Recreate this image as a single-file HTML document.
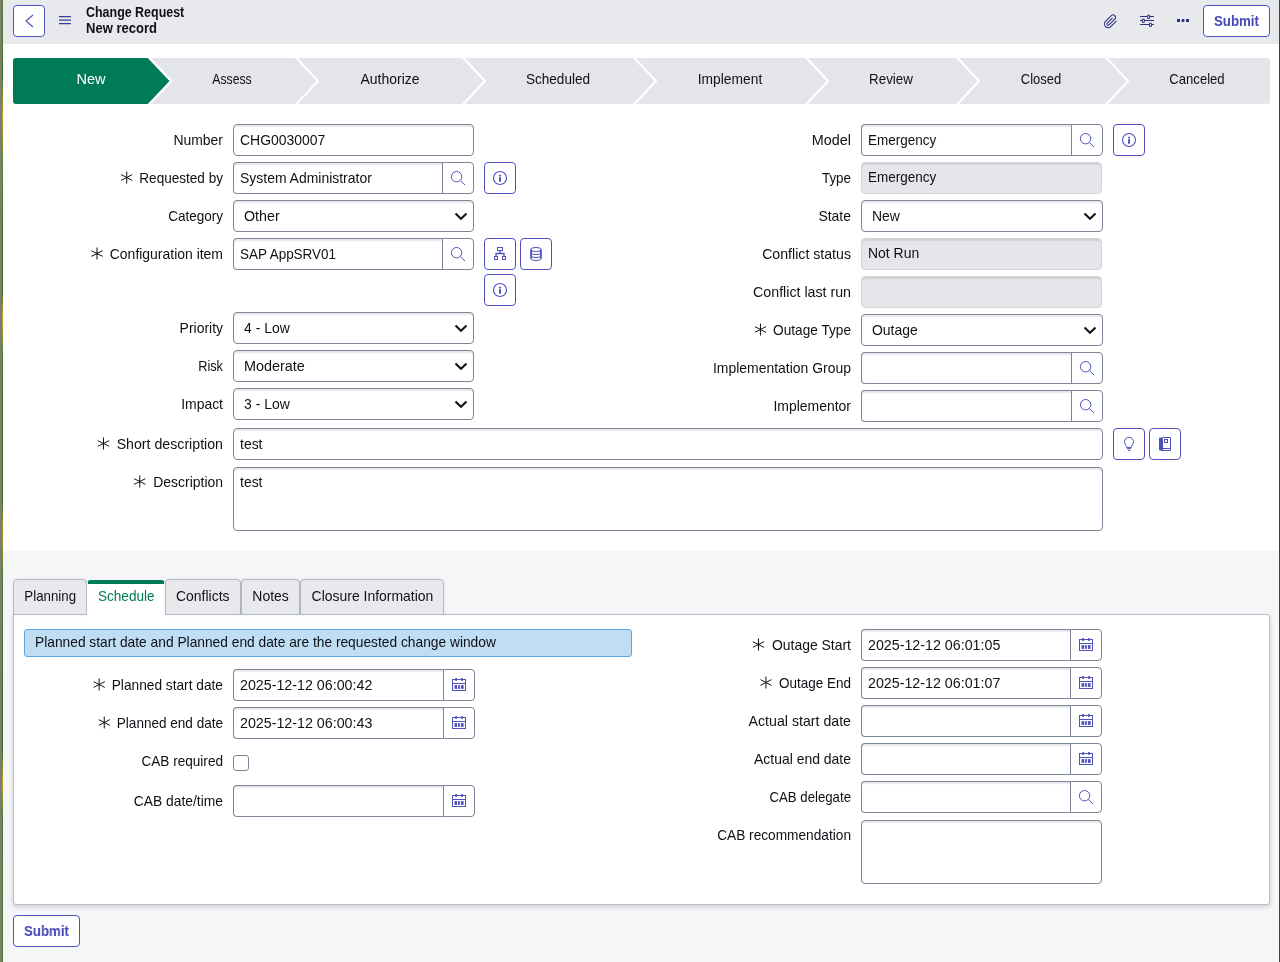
<!DOCTYPE html>
<html>
<head>
<meta charset="utf-8">
<title>Change Request</title>
<style>
*{box-sizing:border-box;margin:0;padding:0}
html,body{width:1280px;height:962px;overflow:hidden}
body{position:relative;will-change:transform;background:#f5f6f8;font-family:"Liberation Sans",sans-serif;font-size:14px;color:#0e1016}
.abs{position:absolute}
#edgeL{position:absolute;left:0;top:0;width:2px;height:962px;background:#7b7b7c;z-index:50}
#edgeL2{position:absolute;left:2px;top:0;width:1px;height:962px;z-index:50;background:linear-gradient(180deg,#5a7a20 0,#3d7a1c 8%,#c9a526 12%,#4a8a22 17%,#2f6d1a 30%,#d3a82a 33%,#3f7f22 37%,#356f1c 52%,#b99b28 55%,#3f8020 60%,#2f6d1a 78%,#c9a526 81%,#3f7f22 85%,#4c7d20 100%)}
#edgeR{position:absolute;left:1278.7px;top:0;width:1.3px;height:962px;background:#2d5216;z-index:50}
#hdr{position:absolute;left:0;top:0;width:1280px;height:44px;background:#e8e9ed}
#white{position:absolute;left:0;top:44px;width:1280px;height:507px;background:#fff}
.ibtn{position:absolute;width:32px;height:32px;border:1px solid #4f52bd;border-radius:4px;background:#fff}
.ibtn svg{position:absolute;left:0;top:0}
.tbtn{position:absolute;height:32px;border:1px solid #4f52bd;border-radius:4px;background:#fff;color:#4447b8;font-weight:bold;font-size:15px;line-height:30px;text-align:center}
.tbtn span{display:inline-block;transform:scaleX(.885);transform-origin:center}
.title{position:absolute;left:85.6px;top:3.6px;font-weight:bold;font-size:15px;line-height:16px;color:#0f1116;white-space:nowrap;transform:scaleX(.83);transform-origin:left top}
.t{display:inline-block;transform:scaleX(.93);transform-origin:left center;white-space:nowrap}
.t.c{transform-origin:center center}
/* process flow */
#flow{position:absolute;left:13px;top:58px;width:1257px;height:46px;background:#e4e5ea;border-radius:3px;overflow:hidden}
#flow .st{position:absolute;top:0;height:46px;line-height:42px;text-align:center;font-size:15px;color:#0e1016;white-space:nowrap;transform:scaleX(.93);transform-origin:center center}
#flow svg{position:absolute;left:0;top:0}
/* form */
.lbl{position:absolute;height:32px;line-height:31px;text-align:right;white-space:nowrap;font-size:15px;color:#0e1016;transform:scaleX(.93);transform-origin:right center}
.lbl svg{display:inline-block;vertical-align:-1px;margin-right:7.5px}
.inp{position:absolute;height:32px;border:1px solid #7d8698;border-radius:4px;background:#fff;box-shadow:inset 0 2px 1px rgba(0,0,0,.09);padding-left:5.5px;line-height:29px;font-size:15px;color:#0f1116;white-space:nowrap;overflow:hidden}
.inp.ro{background:#e4e6ea;border-color:#d2d5db;box-shadow:inset 0 2px 1px rgba(0,0,0,.09);line-height:27px}
.inp.sel{padding-left:10px;line-height:30px}
.inp.sel svg{position:absolute;right:5px;top:11px}
.inp.grp{border-radius:4px 0 0 4px;border-right:none}
.add{position:absolute;width:32px;height:32px;border:1px solid #7d8698;border-radius:0 4px 4px 0;background:#fff}
.add svg{position:absolute;left:0;top:0}
/* tabs */
#panel{position:absolute;left:13px;top:614px;width:1257px;height:291px;background:#fff;border:1px solid #b9bdc8;border-radius:0 3px 3px 3px;box-shadow:0 2px 5px rgba(0,0,0,.17)}
.tab{position:absolute;top:579px;height:36px;border:1px solid #b4b8c5;box-shadow:0 0 3px rgba(0,0,0,.08);border-radius:4px 4px 0 0;background:#e8e9ed;text-align:center;line-height:32px;font-size:15px;color:#0e1016;white-space:nowrap}
.tab.act{top:580px;height:35px;background:#fff;border-color:#fff;border-top:4px solid #007b58;color:#007b58;line-height:24px;box-shadow:none}
.inp.ta{line-height:27px}
#info{position:absolute;left:24px;top:629px;width:608px;height:28px;background:#bfddf3;border:1px solid #5fa8e6;border-radius:3px;padding-left:9.5px;line-height:23.5px;font-size:15px;color:#0e1016;white-space:nowrap}
.chk{position:absolute;width:16px;height:16px;border:1px solid #7d8698;border-radius:3px;background:#fff}
</style>
</head>
<body>
<div id="hdr"></div>
<div id="white"></div>
<div id="edgeL"></div><div id="edgeL2"></div><div id="edgeR"></div>

<!-- HEADER -->
<div class="ibtn" style="left:13px;top:5px">
<svg width="30" height="30" viewBox="0 0 30 30"><path d="M19 9 L12 15 L19 21" fill="none" stroke="#4f52bd" stroke-width="1.1"/></svg>
</div>
<svg class="abs" style="left:58px;top:14px" width="14" height="12" viewBox="0 0 14 12"><path d="M1 2.6H13M1 6.1H13M1 9.7H13" stroke="#3a3c9a" stroke-width="1.2" fill="none"/></svg>
<div class="title">Change Request</div><div class="title" style="top:19.6px;transform:scaleX(.868)">New record</div>
<svg class="abs" style="left:1102px;top:12.8px" width="18" height="18" viewBox="0 0 18 18"><g transform="translate(1.2,1) scale(0.62)"><path d="M21.44 11.05l-9.19 9.19a6 6 0 0 1-8.49-8.49l9.19-9.19a4 4 0 0 1 5.66 5.66l-9.2 9.19a2 2 0 0 1-2.83-2.83l8.49-8.48" fill="none" stroke="#2f3187" stroke-width="1.7"/></g></svg>
<svg class="abs" style="left:1139px;top:13px" width="16" height="16" viewBox="0 0 16 16"><path d="M1 3.5H15M1 7.5H15M1 11.5H15" stroke="#2f3187" stroke-width="1" fill="none"/><path d="M8.6 2.2h2v3.2h-2zM3.3 6.2h2v3.2h-2zM10.4 10.2h2v3.2h-2z" fill="#e8e9ed" stroke="#2f3187" stroke-width="1"/></svg>
<svg class="abs" style="left:1176px;top:18px" width="14" height="6" viewBox="0 0 14 6"><rect x="1" y="1" width="3" height="3" fill="#2f3187"/><rect x="5.5" y="1" width="3" height="3" rx="1" fill="#2f3187"/><rect x="10" y="1" width="3" height="3" fill="#2f3187"/></svg>
<div class="tbtn" style="left:1203px;top:5px;width:67px"><span>Submit</span></div>

<!-- PROCESS FLOW -->
<div id="flow">
<svg width="1257" height="46" viewBox="0 0 1257 46">
<path d="M0 0H134.6L156.7 23L134.6 46H0Z" fill="#007b58"/>
<path d="M135.9 -1L158.3 23L135.9 47" fill="none" stroke="#fff" stroke-width="2.2" stroke-linejoin="round"/>
<path d="M282.6 -1L305.0 23L282.6 47" fill="none" stroke="#fff" stroke-width="2.2" stroke-linejoin="round"/>
<path d="M449.5 -1L471.9 23L449.5 47" fill="none" stroke="#fff" stroke-width="2.2" stroke-linejoin="round"/>
<path d="M620.4 -1L642.9 23L620.4 47" fill="none" stroke="#fff" stroke-width="2.2" stroke-linejoin="round"/>
<path d="M792.6 -1L815.0 23L792.6 47" fill="none" stroke="#fff" stroke-width="2.2" stroke-linejoin="round"/>
<path d="M943.6 -1L966.0 23L943.6 47" fill="none" stroke="#fff" stroke-width="2.2" stroke-linejoin="round"/>
<path d="M1092.6 -1L1115.0 23L1092.6 47" fill="none" stroke="#fff" stroke-width="2.2" stroke-linejoin="round"/>
</svg>
<div class="st" style="left:17.5px;width:120px;color:#fff;transform:scaleX(0.973)">New</div>
<div class="st" style="left:159.0px;width:120px;transform:scaleX(0.816)">Assess</div>
<div class="st" style="left:317.0px;width:120px;transform:scaleX(0.93)">Authorize</div>
<div class="st" style="left:485.0px;width:120px;transform:scaleX(0.904)">Scheduled</div>
<div class="st" style="left:657.0px;width:120px;transform:scaleX(0.92)">Implement</div>
<div class="st" style="left:818.0px;width:120px;transform:scaleX(0.892)">Review</div>
<div class="st" style="left:968.0px;width:120px;transform:scaleX(0.865)">Closed</div>
<div class="st" style="left:1124.0px;width:120px;transform:scaleX(0.872)">Canceled</div>
</div>

<!--FORM-->
<div class="lbl" style="left:-77px;width:300px;top:124px">Number</div>
<div class="inp " style="left:233px;top:124px;width:241px"><span class="t">CHG0030007</span></div>
<div class="lbl" style="left:-77px;width:300px;top:162px;transform:scaleX(0.904)"><svg width="13" height="13" viewBox="0 0 12 13" preserveAspectRatio="none"><path d="M6 0.5V12.5M0.3 3.6L11.7 9.4M0.3 9.4L11.7 3.6" stroke="#0e1016" stroke-width="1" fill="none"/></svg>Requested by</div>
<div class="inp grp" style="left:233px;top:162px;width:210px"><span class="t">System Administrator</span></div><div class="add" style="left:442px;top:162px"><svg width="30" height="30" viewBox="0 0 30 30"><circle cx="13.6" cy="13.7" r="5.2" fill="none" stroke="#4f52bd" stroke-width="1"/><path d="M17.4 17.6L22 22" stroke="#4f52bd" stroke-width="1" fill="none"/></svg></div>
<div class="ibtn" style="left:484px;top:162px"><svg width="30" height="30" viewBox="0 0 30 30"><circle cx="15" cy="15" r="6.5" fill="none" stroke="#4f52bd" stroke-width="1.1"/><rect x="14.1" y="11.8" width="1.9" height="1.6" fill="#4f52bd"/><rect x="14.1" y="14.2" width="1.9" height="4.6" fill="#4f52bd"/></svg></div>
<div class="lbl" style="left:-77px;width:300px;top:200px;transform:scaleX(0.9)">Category</div>
<div class="inp sel" style="left:233px;top:200px;width:241px"><span class="t" style="transform:scaleX(0.95)">Other</span><svg width="14" height="9" viewBox="0 0 14 9"><path d="M1.5 1.5L7 6.8L12.5 1.5" fill="none" stroke="#0e1016" stroke-width="2"/></svg></div>
<div class="lbl" style="left:-77px;width:300px;top:238px"><svg width="13" height="13" viewBox="0 0 12 13" preserveAspectRatio="none"><path d="M6 0.5V12.5M0.3 3.6L11.7 9.4M0.3 9.4L11.7 3.6" stroke="#0e1016" stroke-width="1" fill="none"/></svg>Configuration item</div>
<div class="inp grp" style="left:233px;top:238px;width:210px"><span class="t" style="transform:scaleX(0.897)">SAP AppSRV01</span></div><div class="add" style="left:442px;top:238px"><svg width="30" height="30" viewBox="0 0 30 30"><circle cx="13.6" cy="13.7" r="5.2" fill="none" stroke="#4f52bd" stroke-width="1"/><path d="M17.4 17.6L22 22" stroke="#4f52bd" stroke-width="1" fill="none"/></svg></div>
<div class="ibtn" style="left:484px;top:238px"><svg width="30" height="30" viewBox="0 0 30 30"><g fill="none" stroke="#4f52bd" stroke-width="1"><rect x="12.5" y="8.5" width="5" height="3"/><path d="M15 11.5V14.5M11 17.5V14.5H19V17.5" stroke-width="1.3"/><rect x="9.5" y="17.5" width="3" height="3"/><rect x="17.5" y="17.5" width="3" height="3"/></g></svg></div>
<div class="ibtn" style="left:520px;top:238px"><svg width="30" height="30" viewBox="0 0 30 30"><g fill="none" stroke="#4f52bd" stroke-width="1"><ellipse cx="15" cy="10.5" rx="5.3" ry="2"/><path d="M9.7 10.5V19.5C9.7 20.6 12 21.5 15 21.5S20.3 20.6 20.3 19.5V10.5"/><path d="M9.7 13.5C9.7 14.6 12 15.5 15 15.5S20.3 14.6 20.3 13.5M9.7 16.5C9.7 17.6 12 18.5 15 18.5S20.3 17.6 20.3 16.5"/><path d="M10.5 10.5V19.5M19.5 10.5V19.5" stroke-width="1"/></g></svg></div>
<div class="ibtn" style="left:484px;top:274px"><svg width="30" height="30" viewBox="0 0 30 30"><circle cx="15" cy="15" r="6.5" fill="none" stroke="#4f52bd" stroke-width="1.1"/><rect x="14.1" y="11.8" width="1.9" height="1.6" fill="#4f52bd"/><rect x="14.1" y="14.2" width="1.9" height="4.6" fill="#4f52bd"/></svg></div>
<div class="lbl" style="left:-77px;width:300px;top:312px">Priority</div>
<div class="inp sel" style="left:233px;top:312px;width:241px"><span class="t">4 - Low</span><svg width="14" height="9" viewBox="0 0 14 9"><path d="M1.5 1.5L7 6.8L12.5 1.5" fill="none" stroke="#0e1016" stroke-width="2"/></svg></div>
<div class="lbl" style="left:-77px;width:300px;top:350px;transform:scaleX(0.85)">Risk</div>
<div class="inp sel" style="left:233px;top:350px;width:241px"><span class="t" style="transform:scaleX(0.96)">Moderate</span><svg width="14" height="9" viewBox="0 0 14 9"><path d="M1.5 1.5L7 6.8L12.5 1.5" fill="none" stroke="#0e1016" stroke-width="2"/></svg></div>
<div class="lbl" style="left:-77px;width:300px;top:388px">Impact</div>
<div class="inp sel" style="left:233px;top:388px;width:241px"><span class="t">3 - Low</span><svg width="14" height="9" viewBox="0 0 14 9"><path d="M1.5 1.5L7 6.8L12.5 1.5" fill="none" stroke="#0e1016" stroke-width="2"/></svg></div>
<div class="lbl" style="left:-77px;width:300px;top:428px;transform:scaleX(0.945)"><svg width="13" height="13" viewBox="0 0 12 13" preserveAspectRatio="none"><path d="M6 0.5V12.5M0.3 3.6L11.7 9.4M0.3 9.4L11.7 3.6" stroke="#0e1016" stroke-width="1" fill="none"/></svg>Short description</div>
<div class="inp " style="left:233px;top:428px;width:870px"><span class="t">test</span></div>
<div class="ibtn" style="left:1113px;top:428px"><svg width="30" height="30" viewBox="0 0 30 30"><g transform="translate(-0.5,0.1)" fill="none" stroke="#4f52bd" stroke-width="1"><path d="M13.3 18.5C13.3 16.5 11 15.5 11 12.7A4.5 4.5 0 0 1 20 12.7C20 15.5 17.7 16.5 17.7 18.5Z"/><path d="M13.5 19.1H17.5" stroke-width="1.4"/><path d="M14.3 21.2H16.7" stroke-width="1.2"/></g></svg></div>
<div class="ibtn" style="left:1149px;top:428px"><svg width="30" height="30" viewBox="0 0 30 30"><rect x="9" y="8.5" width="4" height="13" rx="1" fill="#4f52bd"/><path d="M12.5 8.5H20.5V19.5H12.5M11 21.5H20.5M20.5 19.5V21.5" fill="none" stroke="#4f52bd" stroke-width="1"/><rect x="14.5" y="10.5" width="3" height="3" fill="none" stroke="#4f52bd" stroke-width="1"/></svg></div>
<div class="lbl" style="left:-77px;width:300px;top:466px"><svg width="13" height="13" viewBox="0 0 12 13" preserveAspectRatio="none"><path d="M6 0.5V12.5M0.3 3.6L11.7 9.4M0.3 9.4L11.7 3.6" stroke="#0e1016" stroke-width="1" fill="none"/></svg>Description</div>
<div class="inp ta" style="left:233px;top:467px;width:870px;height:64px"><span class="t">test</span></div>
<div class="lbl" style="left:551px;width:300px;top:124px;transform:scaleX(0.96)">Model</div>
<div class="inp grp" style="left:861px;top:124px;width:211px"><span class="t" style="transform:scaleX(0.898)">Emergency</span></div><div class="add" style="left:1071px;top:124px"><svg width="30" height="30" viewBox="0 0 30 30"><circle cx="13.6" cy="13.7" r="5.2" fill="none" stroke="#4f52bd" stroke-width="1"/><path d="M17.4 17.6L22 22" stroke="#4f52bd" stroke-width="1" fill="none"/></svg></div>
<div class="ibtn" style="left:1113px;top:124px"><svg width="30" height="30" viewBox="0 0 30 30"><circle cx="15" cy="15" r="6.5" fill="none" stroke="#4f52bd" stroke-width="1.1"/><rect x="14.1" y="11.8" width="1.9" height="1.6" fill="#4f52bd"/><rect x="14.1" y="14.2" width="1.9" height="4.6" fill="#4f52bd"/></svg></div>
<div class="lbl" style="left:551px;width:300px;top:162px;transform:scaleX(0.893)">Type</div>
<div class="inp ro" style="left:861px;top:162px;width:241px"><span class="t" style="transform:scaleX(0.898)">Emergency</span></div>
<div class="lbl" style="left:551px;width:300px;top:200px">State</div>
<div class="inp sel" style="left:861px;top:200px;width:242px"><span class="t">New</span><svg width="14" height="9" viewBox="0 0 14 9"><path d="M1.5 1.5L7 6.8L12.5 1.5" fill="none" stroke="#0e1016" stroke-width="2"/></svg></div>
<div class="lbl" style="left:551px;width:300px;top:238px;transform:scaleX(0.943)">Conflict status</div>
<div class="inp ro" style="left:861px;top:238px;width:241px"><span class="t">Not Run</span></div>
<div class="lbl" style="left:551px;width:300px;top:276px;transform:scaleX(0.947)">Conflict last run</div>
<div class="inp ro" style="left:861px;top:276px;width:241px"></div>
<div class="lbl" style="left:551px;width:300px;top:314px;transform:scaleX(0.91)"><svg width="13" height="13" viewBox="0 0 12 13" preserveAspectRatio="none"><path d="M6 0.5V12.5M0.3 3.6L11.7 9.4M0.3 9.4L11.7 3.6" stroke="#0e1016" stroke-width="1" fill="none"/></svg>Outage Type</div>
<div class="inp sel" style="left:861px;top:314px;width:242px"><span class="t">Outage</span><svg width="14" height="9" viewBox="0 0 14 9"><path d="M1.5 1.5L7 6.8L12.5 1.5" fill="none" stroke="#0e1016" stroke-width="2"/></svg></div>
<div class="lbl" style="left:551px;width:300px;top:352px">Implementation Group</div>
<div class="inp grp" style="left:861px;top:352px;width:211px"></div><div class="add" style="left:1071px;top:352px"><svg width="30" height="30" viewBox="0 0 30 30"><circle cx="13.6" cy="13.7" r="5.2" fill="none" stroke="#4f52bd" stroke-width="1"/><path d="M17.4 17.6L22 22" stroke="#4f52bd" stroke-width="1" fill="none"/></svg></div>
<div class="lbl" style="left:551px;width:300px;top:390px">Implementor</div>
<div class="inp grp" style="left:861px;top:390px;width:211px"></div><div class="add" style="left:1071px;top:390px"><svg width="30" height="30" viewBox="0 0 30 30"><circle cx="13.6" cy="13.7" r="5.2" fill="none" stroke="#4f52bd" stroke-width="1"/><path d="M17.4 17.6L22 22" stroke="#4f52bd" stroke-width="1" fill="none"/></svg></div>
<!--/FORM-->

<!--TABS-->
<div id="panel"></div>
<div class="tab" style="left:13px;width:74px"><span class="t c" style="transform:scaleX(.887)">Planning</span></div>
<div class="tab act" style="left:87px;width:78px"><span class="t c" style="transform:scaleX(.907)">Schedule</span></div>
<div class="tab" style="left:165px;width:76px"><span class="t c">Conflicts</span></div>
<div class="tab" style="left:241px;width:59px"><span class="t c">Notes</span></div>
<div class="tab" style="left:300px;width:144px"><span class="t c">Closure Information</span></div>
<div id="info"><span class="t" style="transform:scaleX(.918)">Planned start date and Planned end date are the requested change window</span></div>
<div class="lbl" style="left:-77px;width:300px;top:669px;transform:scaleX(0.914)"><svg width="13" height="13" viewBox="0 0 12 13" preserveAspectRatio="none"><path d="M6 0.5V12.5M0.3 3.6L11.7 9.4M0.3 9.4L11.7 3.6" stroke="#0e1016" stroke-width="1" fill="none"/></svg>Planned start date</div>
<div class="inp grp" style="left:233px;top:669px;width:211px"><span class="t" style="transform:scaleX(0.95)">2025-12-12 06:00:42</span></div><div class="add" style="left:443px;top:669px"><svg width="30" height="30" viewBox="0 0 30 30"><g fill="none" stroke="#4f52bd" stroke-width="1"><rect x="8.5" y="9.5" width="13" height="11"/><path d="M8.5 13.5H21.5"/><path d="M12.1 8V11M18 8V11" stroke-width="1.6"/></g><rect x="10.5" y="15.1" width="2.7" height="3.8" fill="#4f52bd"/><rect x="14.1" y="15.1" width="1.8" height="3.8" fill="#4f52bd"/><rect x="16.9" y="15.1" width="2.7" height="3.8" fill="#4f52bd"/></svg></div>
<div class="lbl" style="left:-77px;width:300px;top:707px;transform:scaleX(0.903)"><svg width="13" height="13" viewBox="0 0 12 13" preserveAspectRatio="none"><path d="M6 0.5V12.5M0.3 3.6L11.7 9.4M0.3 9.4L11.7 3.6" stroke="#0e1016" stroke-width="1" fill="none"/></svg>Planned end date</div>
<div class="inp grp" style="left:233px;top:707px;width:211px"><span class="t" style="transform:scaleX(0.95)">2025-12-12 06:00:43</span></div><div class="add" style="left:443px;top:707px"><svg width="30" height="30" viewBox="0 0 30 30"><g fill="none" stroke="#4f52bd" stroke-width="1"><rect x="8.5" y="9.5" width="13" height="11"/><path d="M8.5 13.5H21.5"/><path d="M12.1 8V11M18 8V11" stroke-width="1.6"/></g><rect x="10.5" y="15.1" width="2.7" height="3.8" fill="#4f52bd"/><rect x="14.1" y="15.1" width="1.8" height="3.8" fill="#4f52bd"/><rect x="16.9" y="15.1" width="2.7" height="3.8" fill="#4f52bd"/></svg></div>
<div class="lbl" style="left:-77px;width:300px;top:745px;transform:scaleX(0.906)">CAB required</div>
<div class="chk" style="left:233px;top:755px"></div>
<div class="lbl" style="left:-77px;width:300px;top:785px;transform:scaleX(0.923)">CAB date/time</div>
<div class="inp grp" style="left:233px;top:785px;width:211px"></div><div class="add" style="left:443px;top:785px"><svg width="30" height="30" viewBox="0 0 30 30"><g fill="none" stroke="#4f52bd" stroke-width="1"><rect x="8.5" y="9.5" width="13" height="11"/><path d="M8.5 13.5H21.5"/><path d="M12.1 8V11M18 8V11" stroke-width="1.6"/></g><rect x="10.5" y="15.1" width="2.7" height="3.8" fill="#4f52bd"/><rect x="14.1" y="15.1" width="1.8" height="3.8" fill="#4f52bd"/><rect x="16.9" y="15.1" width="2.7" height="3.8" fill="#4f52bd"/></svg></div>
<div class="lbl" style="left:551px;width:300px;top:629px"><svg width="13" height="13" viewBox="0 0 12 13" preserveAspectRatio="none"><path d="M6 0.5V12.5M0.3 3.6L11.7 9.4M0.3 9.4L11.7 3.6" stroke="#0e1016" stroke-width="1" fill="none"/></svg>Outage Start</div>
<div class="inp grp" style="left:861px;top:629px;width:210px"><span class="t" style="transform:scaleX(0.95)">2025-12-12 06:01:05</span></div><div class="add" style="left:1070px;top:629px"><svg width="30" height="30" viewBox="0 0 30 30"><g fill="none" stroke="#4f52bd" stroke-width="1"><rect x="8.5" y="9.5" width="13" height="11"/><path d="M8.5 13.5H21.5"/><path d="M12.1 8V11M18 8V11" stroke-width="1.6"/></g><rect x="10.5" y="15.1" width="2.7" height="3.8" fill="#4f52bd"/><rect x="14.1" y="15.1" width="1.8" height="3.8" fill="#4f52bd"/><rect x="16.9" y="15.1" width="2.7" height="3.8" fill="#4f52bd"/></svg></div>
<div class="lbl" style="left:551px;width:300px;top:667px;transform:scaleX(0.9)"><svg width="13" height="13" viewBox="0 0 12 13" preserveAspectRatio="none"><path d="M6 0.5V12.5M0.3 3.6L11.7 9.4M0.3 9.4L11.7 3.6" stroke="#0e1016" stroke-width="1" fill="none"/></svg>Outage End</div>
<div class="inp grp" style="left:861px;top:667px;width:210px"><span class="t" style="transform:scaleX(0.95)">2025-12-12 06:01:07</span></div><div class="add" style="left:1070px;top:667px"><svg width="30" height="30" viewBox="0 0 30 30"><g fill="none" stroke="#4f52bd" stroke-width="1"><rect x="8.5" y="9.5" width="13" height="11"/><path d="M8.5 13.5H21.5"/><path d="M12.1 8V11M18 8V11" stroke-width="1.6"/></g><rect x="10.5" y="15.1" width="2.7" height="3.8" fill="#4f52bd"/><rect x="14.1" y="15.1" width="1.8" height="3.8" fill="#4f52bd"/><rect x="16.9" y="15.1" width="2.7" height="3.8" fill="#4f52bd"/></svg></div>
<div class="lbl" style="left:551px;width:300px;top:705px;transform:scaleX(0.945)">Actual start date</div>
<div class="inp grp" style="left:861px;top:705px;width:210px"></div><div class="add" style="left:1070px;top:705px"><svg width="30" height="30" viewBox="0 0 30 30"><g fill="none" stroke="#4f52bd" stroke-width="1"><rect x="8.5" y="9.5" width="13" height="11"/><path d="M8.5 13.5H21.5"/><path d="M12.1 8V11M18 8V11" stroke-width="1.6"/></g><rect x="10.5" y="15.1" width="2.7" height="3.8" fill="#4f52bd"/><rect x="14.1" y="15.1" width="1.8" height="3.8" fill="#4f52bd"/><rect x="16.9" y="15.1" width="2.7" height="3.8" fill="#4f52bd"/></svg></div>
<div class="lbl" style="left:551px;width:300px;top:743px">Actual end date</div>
<div class="inp grp" style="left:861px;top:743px;width:210px"></div><div class="add" style="left:1070px;top:743px"><svg width="30" height="30" viewBox="0 0 30 30"><g fill="none" stroke="#4f52bd" stroke-width="1"><rect x="8.5" y="9.5" width="13" height="11"/><path d="M8.5 13.5H21.5"/><path d="M12.1 8V11M18 8V11" stroke-width="1.6"/></g><rect x="10.5" y="15.1" width="2.7" height="3.8" fill="#4f52bd"/><rect x="14.1" y="15.1" width="1.8" height="3.8" fill="#4f52bd"/><rect x="16.9" y="15.1" width="2.7" height="3.8" fill="#4f52bd"/></svg></div>
<div class="lbl" style="left:551px;width:300px;top:781px;transform:scaleX(0.881)">CAB delegate</div>
<div class="inp grp" style="left:861px;top:781px;width:210px"></div><div class="add" style="left:1070px;top:781px"><svg width="30" height="30" viewBox="0 0 30 30"><circle cx="13.6" cy="13.7" r="5.2" fill="none" stroke="#4f52bd" stroke-width="1"/><path d="M17.4 17.6L22 22" stroke="#4f52bd" stroke-width="1" fill="none"/></svg></div>
<div class="lbl" style="left:551px;width:300px;top:819px;transform:scaleX(0.912)">CAB recommendation</div>
<div class="inp " style="left:861px;top:820px;width:241px;height:64px"></div>
<div class="tbtn" style="left:13px;top:915px;width:67px"><span>Submit</span></div>
<!--/TABS-->

</body>
</html>
